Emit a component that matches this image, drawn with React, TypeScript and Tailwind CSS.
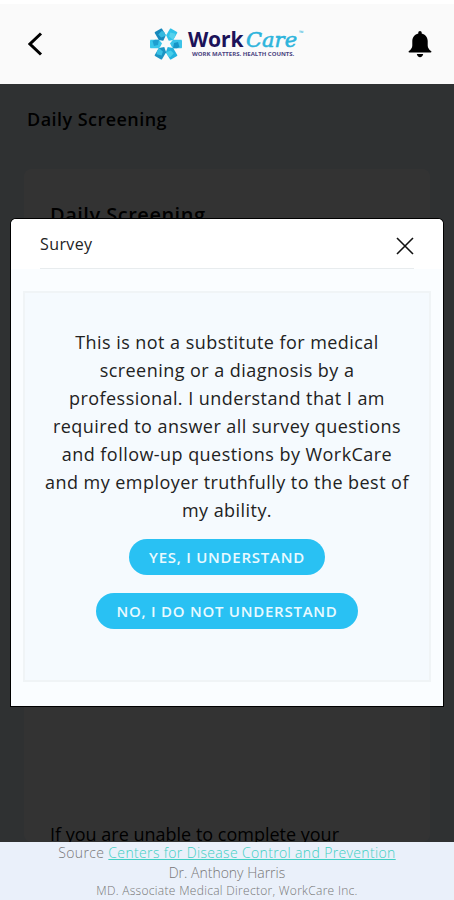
import React, { useState } from 'react';

interface SurveyModalProps {
  onAnswer: (agreed: boolean) => void;
  onClose: () => void;
}

const PETALS = [
  { angle: 0, fill: '#3cc3e8', fold: '#1795c7' },
  { angle: 60, fill: '#22b2de', fold: '#46cdea' },
  { angle: 120, fill: '#1c93c2', fold: '#38c0e4' },
  { angle: 180, fill: '#38c6ea', fold: '#1d9fd0' },
  { angle: 240, fill: '#1687bb', fold: '#35b9df' },
  { angle: 300, fill: '#30c2e8', fold: '#55d2ee' },
];

function Logo() {
  return (
    <svg width="156" height="36" viewBox="0 0 156 36" role="img" aria-label="WorkCare">
      {PETALS.map((p) => (
        <g key={p.angle} transform={`translate(16 18) rotate(${p.angle})`}>
          <path d="M3.500 0 7 -4.200H15.500L16 -3.500V3.500L15.500 4.200H7Z" fill={p.fill} />
          <path d="M7 4.200 8 -1 12 -2 13.500 3 11 4.200Z" fill={p.fold} />
        </g>
      ))}
      <path d="M16 9 21.500 20.500H10.500Z" fill="#fafafa" />
      <text x="38" y="21" fontSize="21" fontWeight="700" fill="#1c1259" fontFamily="'Noto Sans', sans-serif">
        Work
      </text>
      <text x="96" y="21" fontSize="21" fontStyle="italic" fill="#2db4dc" stroke="#2db4dc" strokeWidth="0.6" fontFamily="'DejaVu Serif', serif">
        Care
      </text>
      <text x="149" y="9" fontSize="6" fill="#2db4dc" fontFamily="'Open Sans', sans-serif">
        ™
      </text>
      <text x="42" y="30" fontSize="6" fontWeight="700" fill="#4a4380" fontFamily="'Open Sans', sans-serif">
        WORK MATTERS. HEALTH COUNTS.
      </text>
    </svg>
  );
}

function Header() {
  return (
    <header className="flex h-[84px] shrink-0 items-center justify-between border-t-4 border-white bg-[#fafafa] pr-[22px] pl-7">
      <button type="button" aria-label="Back" className="flex w-5 items-center">
        <svg width="15" height="24" viewBox="0 0 15 24" fill="none" stroke="#000" strokeWidth="3">
          <path d="M13 1.500 2 12 13 22.500" />
        </svg>
      </button>
      <Logo />
      <button type="button" aria-label="Notifications" className="flex w-6 justify-end">
        <svg width="24" height="27" viewBox="0 0 24 27" fill="#000">
          <path d="M12 0c1 0 1.700.8 1.700 1.700v.8c3.600.8 6 3.800 6 7.500v4.500c0 2.300 1.400 4.200 3.300 5.500.8.600.5 1.500-.4 1.500H1.400c-.9 0-1.200-.9-.4-1.500 1.900-1.300 3.300-3.200 3.300-5.500V10c0-3.700 2.400-6.700 6-7.500v-.8C10.300.8 11 0 12 0Z" />
          <path d="M8.800 23h6.400c-.3 2-1.600 3.200-3.200 3.200S9.100 25 8.800 23Z" />
        </svg>
      </button>
    </header>
  );
}

function SurveyModal({ onAnswer, onClose }: SurveyModalProps) {
  return (
    <div className="absolute inset-0 bg-black/80 px-[11px] pt-[135px]">
      <div
        role="dialog"
        aria-labelledby="survey-title"
        className="rounded-t-[5px] bg-[#fafdff] pb-6 shadow-[0_0_0_1px_#000]"
      >
        {/* Title bar */}
        <div className="rounded-t-[5px] bg-white px-[29px]">
          <div className="flex h-[50px] items-center justify-between border-b border-[#e8ecee]">
            <h2 id="survey-title" className="text-base tracking-wide text-[#222]">Survey</h2>
            <button type="button" aria-label="Close" onClick={onClose} className="pt-1">
              <svg width="18" height="18" viewBox="0 0 18 18" fill="none" stroke="#111" strokeWidth="1.6">
                <path d="M1 1 17 17M17 1 1 17" />
              </svg>
            </button>
          </div>
        </div>

        <div className="mx-3 mt-[22px] flex flex-col items-center border-2 border-[#f0f4f6] bg-[#f5fafe] px-[19px] pt-[35px] pb-[51px]">
          <p className="text-center text-lg leading-7 tracking-wide text-[#222]">
            This is not a substitute for medical screening or a diagnosis by a professional. I understand that I am
            required to answer all survey questions and follow-up questions by WorkCare and my employer truthfully to the
            best of my ability.
          </p>
          <button
            type="button"
            onClick={() => onAnswer(true)}
            className="mt-[15px] h-9 rounded-full bg-[#29c1f3] px-5 text-[15px] font-semibold tracking-wider text-[#e9faff]"
          >
            YES, I UNDERSTAND
          </button>
          <button
            type="button"
            onClick={() => onAnswer(false)}
            className="mt-[18px] h-9 rounded-full bg-[#29c1f3] px-5 text-[15px] font-semibold tracking-wider text-[#e9faff]"
          >
            NO, I DO NOT UNDERSTAND
          </button>
        </div>
      </div>
    </div>
  );
}

export default function App() {
  const [surveyOpen, setSurveyOpen] = useState(true);

  return (
    <div className="flex h-screen flex-col font-['Open_Sans',sans-serif]">
      <Header />

      <main className="relative flex-1 overflow-hidden bg-[#ebf4fa]">
        <div className="flex h-full flex-col px-6 pt-[21px]">
          <h1 className="px-[3px] text-lg leading-7 font-semibold tracking-wide text-black">Daily Screening</h1>
          <section className="mt-9 flex flex-1 flex-col justify-between rounded-lg bg-white px-[26px] pt-8">
            <h2 className="text-xl leading-7 font-semibold tracking-wide text-black">Daily Screening</h2>
            <p className="-mb-1 text-lg leading-6 text-black">If you are unable to complete your</p>
          </section>
        </div>
        {surveyOpen && <SurveyModal onAnswer={() => setSurveyOpen(false)} onClose={() => setSurveyOpen(false)} />}
      </main>

      <footer className="h-[58px] shrink-0 bg-[#eaf0fa] pt-px text-center font-light text-[#777]">
        <p className="text-sm leading-5 tracking-wide">
          Source{' '}
          <a href="#cdc" className="text-[#3fcfc4] underline">
            Centers for Disease Control and Prevention
          </a>
        </p>
        <p className="text-sm leading-5">Dr. Anthony Harris</p>
        <p className="text-xs leading-4 tracking-wide">MD. Associate Medical Director, WorkCare Inc.</p>
      </footer>
    </div>
  );
}
